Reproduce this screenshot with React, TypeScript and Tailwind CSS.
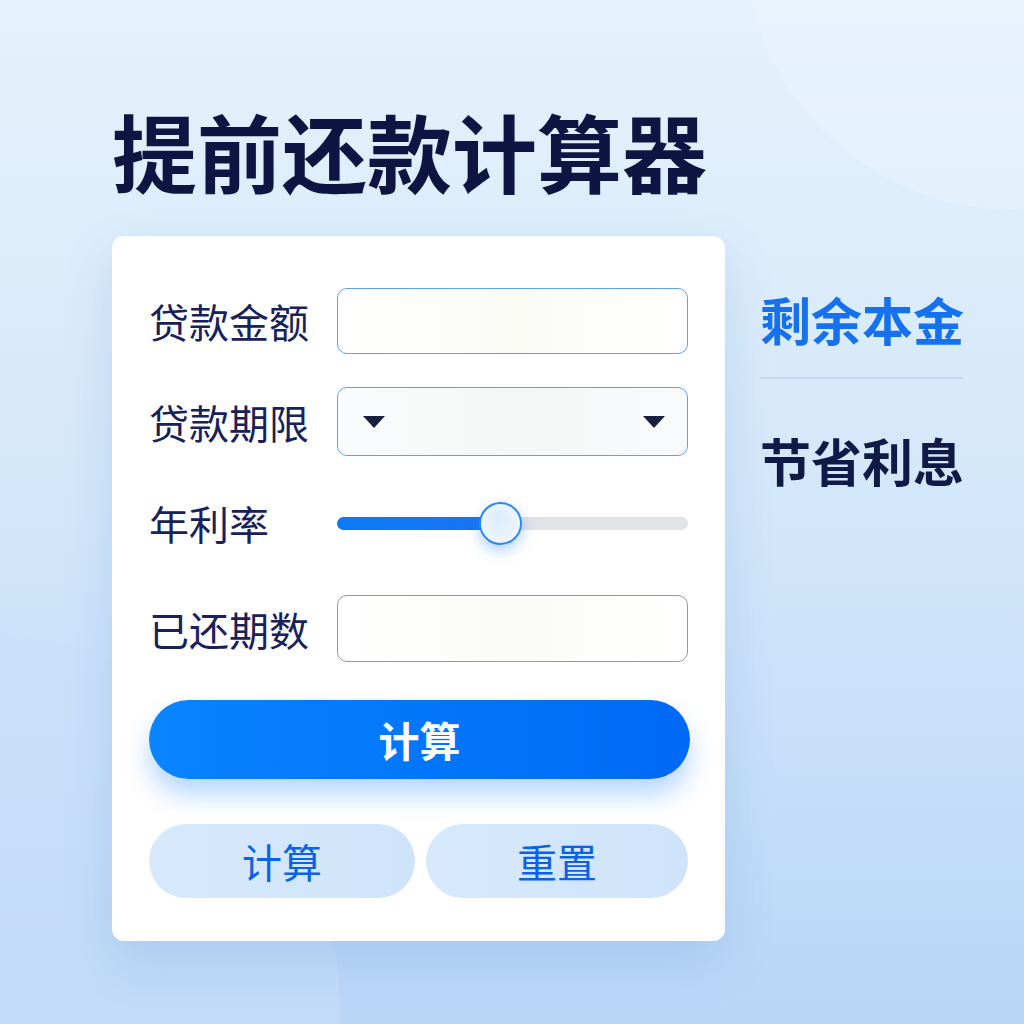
import React from "react";

function Caret() {
  return (
    <svg width="24" height="14" viewBox="0 0 24 14">
      <polygon points="1,1 23,1 12,13" fill="#17203f" />
    </svg>
  );
}

export default function App() {
  return (
    <div
      className="relative w-[1024px] h-[1024px] overflow-hidden bg-gradient-to-b from-[#e6f2fc] via-[#d3e7fa] to-[#b9d6f7]"
      style={{ fontFamily: '"Noto Sans CJK SC", "Noto Sans", sans-serif' }}
    >
      {/* background shapes */}
      <div className="absolute -right-[260px] -top-[330px] w-[540px] h-[540px] rounded-full bg-[#eaf4fd] opacity-50" />
      <div className="absolute -left-[420px] top-[630px] w-[760px] h-[760px] rounded-full bg-[#c9e0f9] opacity-50" />

      <div className="relative pl-[112px] pt-[107px]">
        <h1 className="text-[85px] leading-none font-bold text-[#0e1542]">
          提前还款计算器
        </h1>

        <div className="flex mt-[44px]">
          {/* form card */}
          <div className="w-[613px] h-[705px] bg-white rounded-[12px] shadow-[0_20px_50px_rgba(60,120,200,0.18)] pl-[37px] pr-[37px] pt-[52px]">
            <div className="flex items-center">
              <div className="w-[188px] text-[40px] leading-none text-[#17215a]">贷款金额</div>
              <div className="w-[351px] h-[66px] rounded-[10px] border border-[#5ea2ee] bg-gradient-to-r from-white via-[#fbfbf6] to-white" />
            </div>

            <div className="flex items-center mt-[33px]">
              <div className="w-[188px] text-[40px] leading-none text-[#17215a]">贷款期限</div>
              <div className="w-[351px] h-[69px] rounded-[10px] border border-[#5ea2ee] bg-gradient-to-r from-[#fafcfd] via-[#f5f7f6] to-[#f8fafc] flex items-center justify-between pl-[24px] pr-[21px]">
                <Caret />
                <Caret />
              </div>
            </div>

            <div className="flex items-center mt-[45px] h-[44px]">
              <div className="w-[188px] text-[40px] leading-none text-[#17215a]">年利率</div>
              <div className="relative w-[351px] h-[13px] rounded-full bg-[#e0e3e8]">
                <div className="w-[163px] h-[13px] rounded-full bg-gradient-to-r from-[#0a7af5] to-[#1873ee]" />
                <div className="absolute left-[142px] -top-[15px] w-[43px] h-[43px] rounded-full border-2 border-[#2a88f6] bg-[radial-gradient(circle_at_45%_40%,#dcecfb,#f6fafe)] shadow-[0_6px_14px_rgba(40,130,240,0.35)]" />
              </div>
            </div>

            <div className="flex items-center mt-[50px]">
              <div className="w-[188px] text-[40px] leading-none text-[#17215a]">已还期数</div>
              <div className="w-[351px] h-[67px] rounded-[10px] border border-[#8e98ae] bg-gradient-to-r from-white via-[#fbfbf7] to-white" />
            </div>

            <button className="mt-[38px] w-[541px] h-[79px] rounded-full bg-gradient-to-r from-[#0a84ff] to-[#0069f6] text-white text-[41px] font-semibold leading-none shadow-[0_16px_26px_rgba(30,130,255,0.32)] flex items-center justify-center">
              计算
            </button>

            <div className="flex gap-[11px] mt-[45px]">
              <button className="w-[267px] h-[74px] rounded-full bg-gradient-to-r from-[#d7e9fb] to-[#cfe4fb] text-[#0c62e6] text-[40px] font-normal leading-none flex items-center justify-center">
                计算
              </button>
              <button className="w-[263px] h-[74px] rounded-full bg-gradient-to-r from-[#d7e9fb] to-[#cfe4fb] text-[#0c62e6] text-[40px] font-normal leading-none flex items-center justify-center">
                重置
              </button>
            </div>
          </div>

          {/* results */}
          <div className="ml-[35px] pt-[58px] w-[215px] whitespace-nowrap">
            <div className="text-[51px] leading-none font-bold text-[#1671ee]">剩余本金</div>
            <div className="mt-[32px] h-[2px] w-[203px] bg-[#c7d9ef]" />
            <div className="mt-[56px] text-[51px] leading-none font-bold text-[#101a46]">节省利息</div>
          </div>
        </div>
      </div>
    </div>
  );
}
